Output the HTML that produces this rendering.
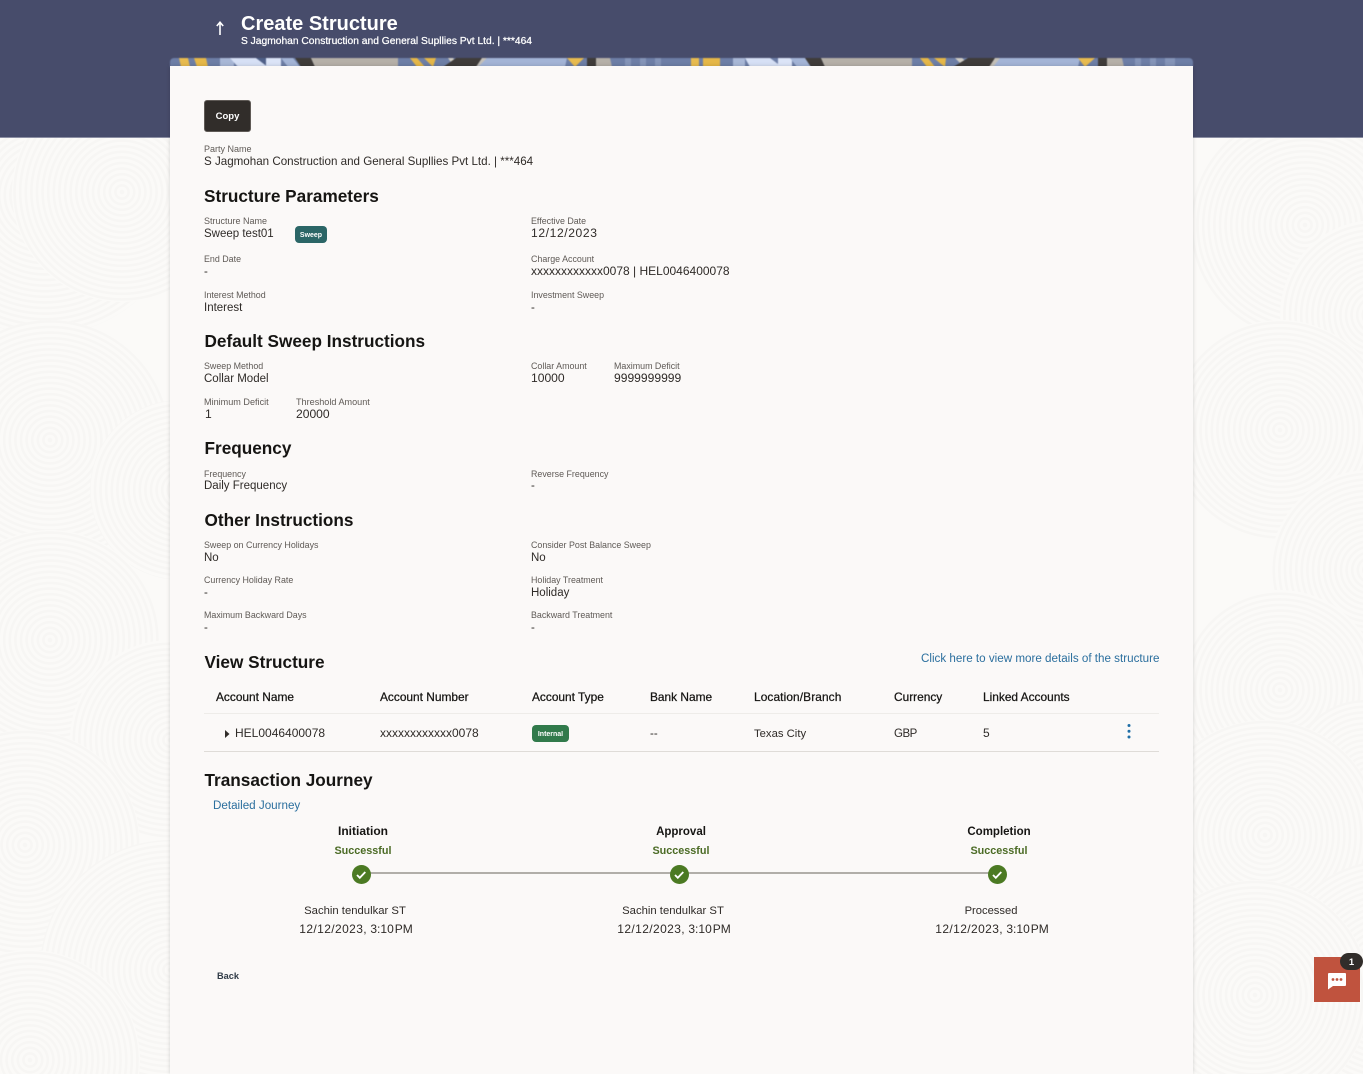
<!DOCTYPE html>
<html lang="en"><head><meta charset="utf-8"><title>Create Structure</title>
<style>
html,body{margin:0;padding:0;width:1363px;height:1074px;overflow:hidden}
body{background:#fbfaf8;font-family:"Liberation Sans",sans-serif;color:#161513}
#p{position:absolute;left:0;top:0;width:1363px;height:1074px;overflow:hidden;background:#fbfaf8}
.t{position:absolute;white-space:nowrap;line-height:14px;height:14px;filter:blur(.3px)}
.l{font-size:8.9px;color:#5f5a56}
.v{font-size:11.5px;color:#2f2b28}
.n{font-size:12.1px;color:#2f2b28}
.d{letter-spacing:.6px}
.j{letter-spacing:.4px}
.h{font-size:17.2px;font-weight:700;color:#161513;line-height:20px;height:20px}
.th{font-size:11.9px;color:#161513;-webkit-text-stroke:.25px #161513}
.ctr{text-align:center;width:200px}
.a{color:#2b6f9e;font-size:11.64px}
.g{color:#4b6b25;font-weight:700;font-size:10.8px}
.b{font-weight:700;font-size:11.5px}
</style></head><body><div id="p">
<svg style="position:absolute;left:0;top:0" width="1363" height="1074" viewBox="0 0 1363 1074">
<defs><radialGradient id="r" gradientUnits="userSpaceOnUse" cx="0" cy="0" r="5.6" spreadMethod="repeat">
<stop offset="0" stop-color="#f7f6f4"/><stop offset=".36" stop-color="#f7f6f4"/><stop offset=".46" stop-color="#fbfaf8"/><stop offset=".9" stop-color="#fbfaf8"/><stop offset="1" stop-color="#f7f6f4"/>
</radialGradient></defs>
<g fill="url(#r)">
<circle transform="translate(45,195)" r="140"/>
<circle transform="translate(122,192)" r="110"/>
<circle transform="translate(50,440)" r="120"/>
<circle transform="translate(180,490)" r="90"/>
<circle transform="translate(50,640)" r="110"/>
<circle transform="translate(170,740)" r="100"/>
<circle transform="translate(25,845)" r="115"/>
<path transform="translate(170,970)" d="M-78 104A130 130 0 1 1 78 104Z"/>
<path transform="translate(30,1060)" d="M-109.1 14A110 110 0 1 1 109.1 14Z"/>
<circle transform="translate(1305,225)" r="115"/>
<circle transform="translate(1375,315)" r="95"/>
<circle transform="translate(1280,430)" r="110"/>
<circle transform="translate(1370,570)" r="100"/>
<circle transform="translate(1280,690)" r="100"/>
<circle transform="translate(1365,775)" r="75"/>
<circle transform="translate(1265,835)" r="115"/>
<path transform="translate(1390,980)" d="M-74.6 94A120 120 0 1 1 74.6 94Z"/>
<path transform="translate(1255,995)" d="M-83.6 79A115 115 0 1 1 83.6 79Z"/>
</g></svg>

<div style="position:absolute;left:0;top:0;width:1363px;height:138px;background:#474c6b;border-bottom:1px solid #8b8ea3;box-sizing:border-box"></div>
<svg style="position:absolute;left:170px;top:58px;filter:blur(.5px)" width="1023" height="9" viewBox="170 0 1023 9">
<path d="M170 9V4a4 4 0 0 1 4-4H1189a4 4 0 0 1 4 4V9Z" fill="#6d7ea6"/>
<g>
<polygon points="179,0 188,0 190,9 181,9" fill="#e8bb4f"/>
<polygon points="194,0 206,0 208,9 197,9" fill="#e5b748"/>
<rect x="220" y="0" width="14" height="9" fill="#a8b7d6"/>
<polygon points="230,0 256,0 268,9 238,9" fill="#d6e0f5"/>
<polygon points="256,0 266,0 266,9 268,9" fill="#4f6088"/>
<rect x="266" y="0" width="15" height="9" fill="#dbe4f7"/>
<polygon points="281,0 293,0 300,9 288,9" fill="#a3b4d6"/>
<polygon points="295,0 311,0 315,9 301,9" fill="#3f3c3a"/>
<polygon points="311,0 398,0 398,9 315,9" fill="#b5b0a8"/>
<polygon points="410,0 417,0 425,9 417,9" fill="#e5b748"/>
<polygon points="424,0 436,0 433,9 430,6" fill="#e5b748"/>
<polygon points="448,0 453,0 460,9 454,9" fill="#cfccc4"/>
<polygon points="456,0 482,0 476,9 443,9" fill="#3f3c3a"/>
<polygon points="482,0 487,0 480,9 476,9" fill="#c4c0b8"/>
<polygon points="487,0 567,0 565,9 478,9" fill="#a3b4d6"/>
<polygon points="567,0 584,0 575,9" fill="#e8bb4f"/>
<rect x="587" y="0" width="9" height="9" fill="#3f3c3a"/>
<polygon points="596,0 610,0 612,9 596,9" fill="#b5b0a8"/>
<rect x="625" y="0" width="6" height="9" fill="#8494b8"/><rect x="640" y="0" width="6" height="9" fill="#8494b8"/><rect x="655" y="0" width="6" height="9" fill="#8494b8"/>
<rect x="691" y="0" width="8" height="9" fill="#e8bb4f"/>
<rect x="703" y="0" width="17" height="9" fill="#e5b748"/>
<rect x="733" y="0" width="12" height="9" fill="#a8b7d6"/>
<polygon points="745,0 770,0 782,9 750,9" fill="#d6e0f5"/>
<rect x="778" y="0" width="14" height="9" fill="#dbe4f7"/>
<polygon points="790,0 805,0 811,9 797,9" fill="#a3b4d6"/>
<polygon points="805,0 821,0 825,9 811,9" fill="#3f3c3a"/>
<polygon points="821,0 912,0 912,9 825,9" fill="#b5b0a8"/>
<polygon points="920,0 928,0 935,9 927,9" fill="#e5b748"/>
<polygon points="934,0 946,0 945,9 941,6" fill="#e5b748"/>
<polygon points="955,0 962,0 972,9 964,9" fill="#cfccc4"/>
<polygon points="968,0 995,0 990,9 953,9" fill="#3f3c3a"/>
<polygon points="995,0 1002,0 995,9 989,9" fill="#c4c0b8"/>
<polygon points="1000,0 1080,0 1078,9 993,9" fill="#a3b4d6"/>
<polygon points="1078,0 1095,0 1085,9" fill="#e8bb4f"/>
<rect x="1098" y="0" width="9" height="9" fill="#3f3c3a"/>
<polygon points="1107,0 1122,0 1124,9 1107,9" fill="#b5b0a8"/>
<rect x="1135" y="0" width="6" height="9" fill="#8494b8"/><rect x="1150" y="0" width="6" height="9" fill="#8494b8"/><rect x="1165" y="0" width="10" height="9" fill="#8494b8"/>
</g>
</svg>
<div style="position:absolute;left:170px;top:66px;width:1023px;height:1008px;background:#fbf9f8;box-shadow:0 0 4px rgba(0,0,0,.16)"></div>

<svg style="position:absolute;left:214px;top:19px" width="12" height="18" viewBox="0 0 12 18"><path d="M6 16V3.5M2.8 7 6 3.2 9.2 7" fill="none" stroke="#fff" stroke-width="1.6"/></svg>
<div class="t" style="left:241px;top:13px;font-size:20px;font-weight:700;color:#fff;line-height:22px;height:22px">Create Structure</div>
<div class="t" style="left:241px;top:35px;font-size:10.25px;color:#fff;-webkit-text-stroke:.25px #fff">S Jagmohan Construction and General Supllies Pvt Ltd. | ***464</div>

<div style="position:absolute;left:204px;top:100px;width:47px;height:32px;background:#312d2a;border-radius:3px;box-sizing:border-box;border:1px solid #5f5a56"></div>
<div class="t" style="left:204px;top:110px;width:47px;text-align:center;font-size:9.5px;font-weight:700;color:#fff">Copy</div>

<div class="t l" style="left:204px;top:142px;font-size:9px">Party Name</div>
<div class="t v" style="left:204px;top:155px;font-size:11.6px">S Jagmohan Construction and General Supllies Pvt Ltd. | ***464</div>

<div class="t h" style="left:204px;top:186px">Structure Parameters</div>
<div class="t l" style="left:204px;top:214px;font-size:9px">Structure Name</div>
<div class="t v" style="left:204px;top:227px">Sweep test01</div>
<div style="position:absolute;left:295px;top:226px;width:32px;height:17px;background:#2b6667;border-radius:4px"></div>
<div class="t" style="left:295px;top:228px;width:32px;text-align:center;font-size:7px;font-weight:700;color:#fff;margin-top:1px">Sweep</div>
<div class="t l" style="left:531px;top:214px">Effective Date</div>
<div class="t n d" style="left:531px;top:226px">12/12/2023</div>
<div class="t l" style="left:204px;top:252px">End Date</div>
<div class="t v" style="left:204px;top:265px">-</div>
<div class="t l" style="left:531px;top:252px">Charge Account</div>
<div class="t n" style="left:531px;top:264px;font-size:12px">xxxxxxxxxxxx0078 | HEL0046400078</div>
<div class="t l" style="left:204px;top:288px">Interest Method</div>
<div class="t v" style="left:204px;top:301px">Interest</div>
<div class="t l" style="left:531px;top:288px">Investment Sweep</div>
<div class="t v" style="left:531px;top:301px">-</div>

<div class="t h" style="left:204.5px;top:331px">Default Sweep Instructions</div>
<div class="t l" style="left:204px;top:359px">Sweep Method</div>
<div class="t v" style="left:204px;top:372px">Collar Model</div>
<div class="t l" style="left:531px;top:359px">Collar Amount</div>
<div class="t n" style="left:531px;top:371px">10000</div>
<div class="t l" style="left:614px;top:359px">Maximum Deficit</div>
<div class="t n" style="left:614px;top:371px">9999999999</div>
<div class="t l" style="left:204px;top:395px;font-size:9.1px">Minimum Deficit</div>
<div class="t n" style="left:205px;top:407px">1</div>
<div class="t l" style="left:296px;top:395px;font-size:9.1px">Threshold Amount</div>
<div class="t n" style="left:296px;top:407px">20000</div>

<div class="t h" style="left:204.5px;top:438px">Frequency</div>
<div class="t l" style="left:204px;top:467px">Frequency</div>
<div class="t v" style="left:204px;top:479px">Daily Frequency</div>
<div class="t l" style="left:531px;top:467px">Reverse Frequency</div>
<div class="t v" style="left:531px;top:479px">-</div>

<div class="t h" style="left:204.5px;top:510px">Other Instructions</div>
<div class="t l" style="left:204px;top:538px">Sweep on Currency Holidays</div>
<div class="t v" style="left:204px;top:551px">No</div>
<div class="t l" style="left:531px;top:538px">Consider Post Balance Sweep</div>
<div class="t v" style="left:531px;top:551px">No</div>
<div class="t l" style="left:204px;top:573px">Currency Holiday Rate</div>
<div class="t v" style="left:204px;top:586px">-</div>
<div class="t l" style="left:531px;top:573px">Holiday Treatment</div>
<div class="t v" style="left:531px;top:586px">Holiday</div>
<div class="t l" style="left:204px;top:608px">Maximum Backward Days</div>
<div class="t v" style="left:204px;top:621px">-</div>
<div class="t l" style="left:531px;top:608px">Backward Treatment</div>
<div class="t v" style="left:531px;top:621px">-</div>

<div class="t h" style="left:204.5px;top:652px">View Structure</div>
<div class="t a" style="left:921px;top:652px">Click here to view more details of the structure</div>

<div class="t th" style="left:216px;top:690px">Account Name</div>
<div class="t th" style="left:380px;top:690px">Account Number</div>
<div class="t th" style="left:532px;top:690px">Account Type</div>
<div class="t th" style="left:650px;top:690px">Bank Name</div>
<div class="t th" style="left:754px;top:690px;letter-spacing:.1px">Location/Branch</div>
<div class="t th" style="left:894px;top:690px">Currency</div>
<div class="t th" style="left:983px;top:690px">Linked Accounts</div>
<div style="position:absolute;left:204px;top:713px;width:955px;height:1px;background:#eeece9"></div>

<svg style="position:absolute;left:225px;top:730px" width="5" height="8" viewBox="0 0 5 8"><path d="M0 0 4.5 4 0 8Z" fill="#312d2a"/></svg>
<div class="t n" style="left:235px;top:726px;font-size:12px">HEL0046400078</div>
<div class="t n" style="left:380px;top:726px;font-size:12px">xxxxxxxxxxxx0078</div>
<div style="position:absolute;left:532px;top:725px;width:37px;height:17px;background:#317a4b;border-radius:4px"></div>
<div class="t" style="left:532px;top:728px;width:37px;text-align:center;font-size:7px;font-weight:700;color:#fff">Internal</div>
<div class="t v" style="left:650px;top:727px">--</div>
<div class="t v" style="left:754px;top:727px;font-size:11.3px">Texas City</div>
<div class="t v" style="left:894px;top:727px;font-size:11.5px;letter-spacing:-.5px">GBP</div>
<div class="t n" style="left:983px;top:726px;font-size:12px">5</div>
<svg style="position:absolute;left:1126px;top:723px" width="6" height="17" viewBox="0 0 6 17"><circle cx="3" cy="2.5" r="1.5" fill="#1f6ea6"/><circle cx="3" cy="8.3" r="1.5" fill="#1f6ea6"/><circle cx="3" cy="14" r="1.5" fill="#1f6ea6"/></svg>
<div style="position:absolute;left:204px;top:751px;width:955px;height:1px;background:#dfdcd8"></div>

<div class="t h" style="left:204.5px;top:770px">Transaction Journey</div>
<div class="t a" style="left:213px;top:799px">Detailed Journey</div>

<div class="t b ctr" style="left:263px;top:824px;font-size:12px">Initiation</div>
<div class="t g ctr" style="left:263px;top:844px">Successful</div>
<div class="t b ctr" style="left:581px;top:825px">Approval</div>
<div class="t g ctr" style="left:581px;top:844px">Successful</div>
<div class="t b ctr" style="left:899px;top:825px">Completion</div>
<div class="t g ctr" style="left:899px;top:844px">Successful</div>

<svg style="position:absolute;left:350px;top:863px" width="660" height="24" viewBox="350 863 660 24">
<rect x="370" y="872" width="620" height="2" fill="#b1aea9"/>
<g fill="#4b7a23"><circle cx="361.5" cy="874.5" r="9.5"/><circle cx="679.5" cy="874.5" r="9.5"/><circle cx="997.5" cy="874.5" r="9.5"/></g>
<g fill="none" stroke="#fff" stroke-width="1.8"><path d="M357 875l2.8 2.8 5.5-5.8"/><path d="M675 875l2.8 2.8 5.5-5.8"/><path d="M993 875l2.8 2.8 5.5-5.8"/></g>
</svg>

<div class="t v ctr" style="left:255px;top:904px;font-size:11.3px">Sachin tendulkar ST</div>
<div class="t n ctr" style="left:256px;top:922px;font-size:12px"><span class="j">12/12/2023,</span> 3:10<span style="margin-left:1px">PM</span></div>
<div class="t v ctr" style="left:573px;top:904px;font-size:11.3px">Sachin tendulkar ST</div>
<div class="t n ctr" style="left:574px;top:922px;font-size:12px"><span class="j">12/12/2023,</span> 3:10<span style="margin-left:1px">PM</span></div>
<div class="t v ctr" style="left:891px;top:904px;font-size:11.2px">Processed</div>
<div class="t n ctr" style="left:892px;top:922px;font-size:12px"><span class="j">12/12/2023,</span> 3:10<span style="margin-left:1px">PM</span></div>

<div class="t" style="left:217px;top:969px;font-size:9.2px;font-weight:700;color:#2f3a46">Back</div>

<div style="position:absolute;left:1314px;top:957px;width:46px;height:45px;background:#c0533e"></div>
<svg style="position:absolute;left:1327px;top:972px" width="20" height="18" viewBox="0 0 20 18"><path d="M2 1H18a1 1 0 0 1 1 1V13a1 1 0 0 1-1 1H6L1 17.5V2a1 1 0 0 1 1-1Z" fill="#fff"/><circle cx="6" cy="7.5" r="1.4" fill="#c0533e"/><circle cx="10" cy="7.5" r="1.4" fill="#c0533e"/><circle cx="14" cy="7.5" r="1.4" fill="#c0533e"/></svg>
<div style="position:absolute;left:1340px;top:953px;width:23px;height:17px;background:#312d2a;border-radius:9px"></div>
<div class="t" style="left:1340px;top:956px;width:23px;text-align:center;font-size:9.5px;font-weight:700;color:#fff">1</div>
</div></body></html>
